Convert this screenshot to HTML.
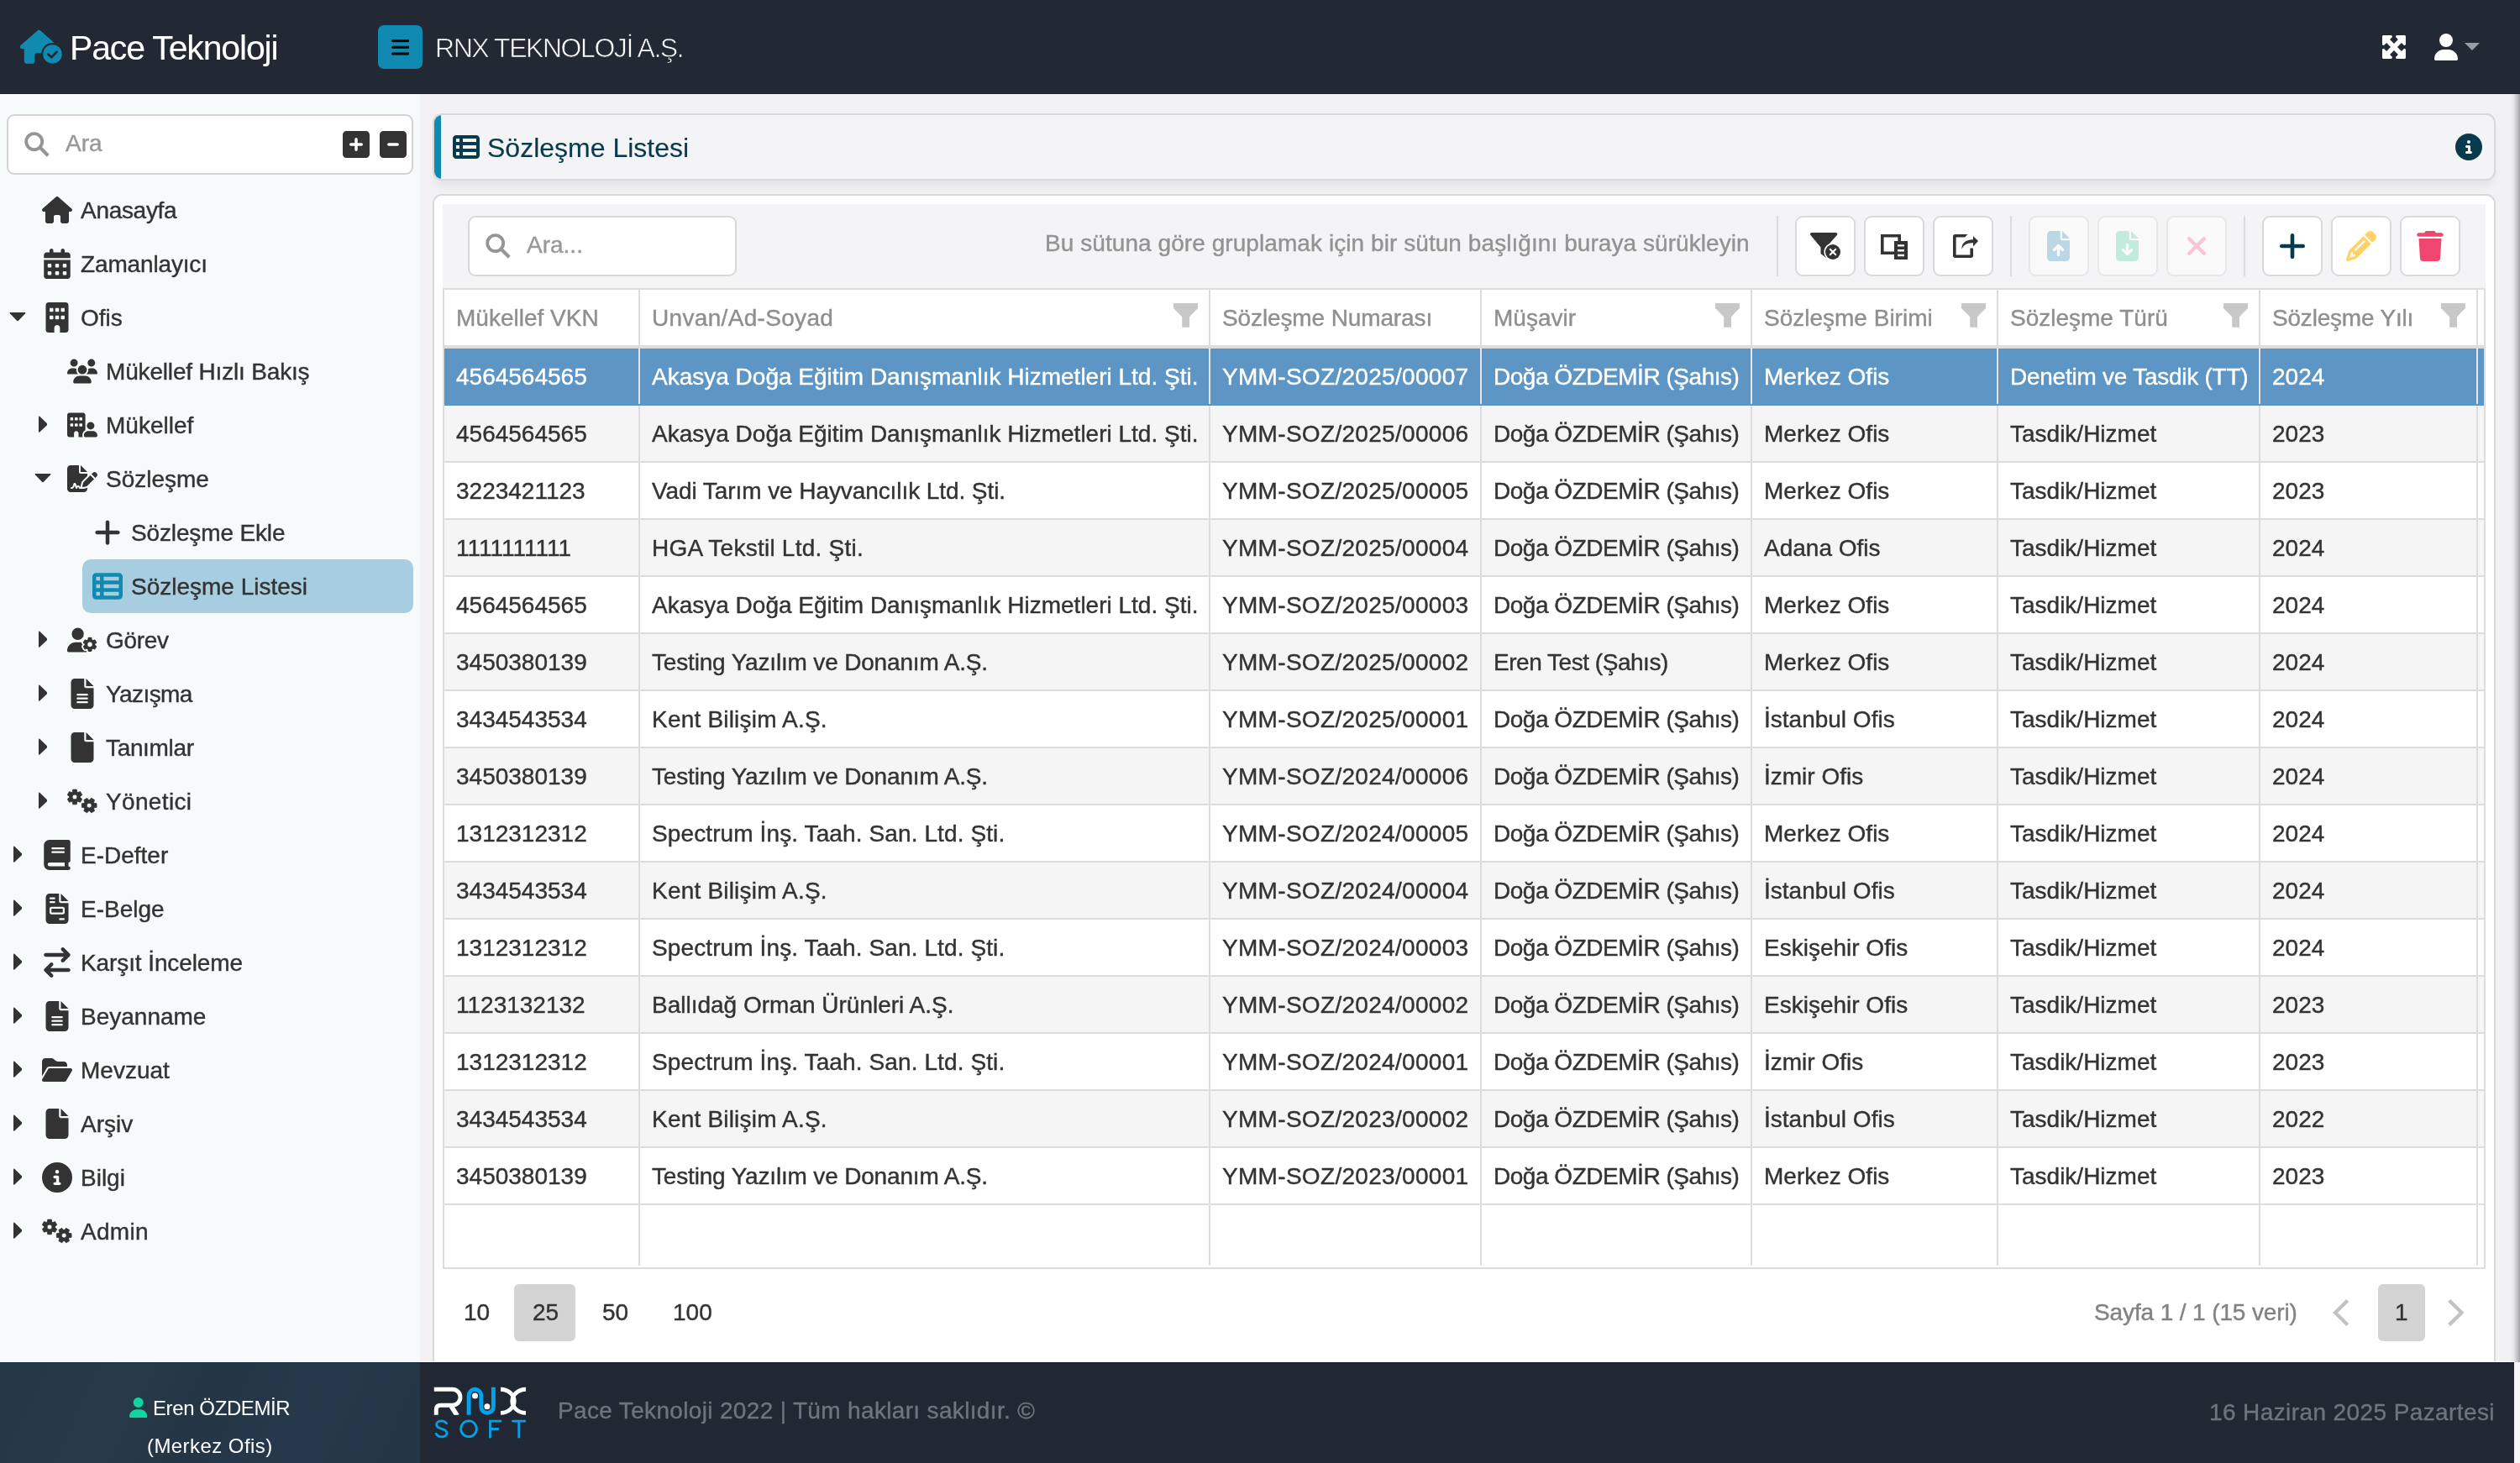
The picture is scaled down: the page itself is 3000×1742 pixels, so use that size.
<!DOCTYPE html><html><head><meta charset="utf-8"><title>Sözleşme Listesi</title><style>
*{box-sizing:border-box;margin:0;padding:0}
html,body{width:3000px;height:1742px;overflow:hidden}
body{position:relative;background:#f2f2f5;font-family:"Liberation Sans",sans-serif;font-size:28px;color:#333;-webkit-text-stroke:0.4px}
#w{position:absolute;left:0;top:0;width:3000px;height:1742px;will-change:transform}
.abs{position:absolute}
.t{position:absolute;white-space:nowrap;line-height:1}
#hdr{left:0;top:0;width:3000px;height:112px;background:#222834;box-shadow:inset 0 -1px 0 #1a202b}
#side{left:0;top:112px;width:500px;height:1510px;background:#f6fafb}
#foot{left:0;top:1621px;width:2993px;height:121px;background:#212834;border-top:1px solid #fff;box-shadow:inset 0 1px 0 #141b27}
#footl{left:0;top:1622px;width:500px;height:120px;box-shadow:inset 0 1px 0 #16283a;background:linear-gradient(115deg,#253646 0%,#28394a 30%,#243546 48%,#27384a 70%,#243546 100%)}
.mi{position:absolute;left:0;width:500px;height:64px}
.mi .t{top:18px;font-size:28px;color:#333}
.btn{position:absolute;top:257px;width:72px;height:72px;border:2px solid #dadada;border-radius:9px;background:#fff}
.btn.dis{background:#fafafb;border-color:#e8e8e8}
.sep{position:absolute;top:257px;width:2px;height:72px;background:#dcdcdc}
.row{position:absolute;left:529px;width:2428px;height:68px;border-bottom:2px solid #ddd;background:#fff}
.row.alt{background:#f5f5f5}
.row.sel{background:#5d95c5;color:#fff;border-bottom-color:#5d95c5}
.row.sel .c{border-left-color:#e4e4e4}
.c{position:absolute;top:0;height:100%;line-height:68px;font-size:28px;white-space:nowrap;padding-left:14px;border-left:2px solid #ddd;overflow:hidden}
.c:first-child{border-left:none}
.h .c{color:#8f8f8f;line-height:68px}
</style></head><body><div id="w">
<div id="hdr" class="abs"></div>
<svg viewBox="0 0 68 44" style="position:absolute;left:22px;top:34px;width:68px;height:44px;" fill="currentColor" preserveAspectRatio="xMidYMid meet"><defs><mask id="lgm"><rect width="68" height="44" fill="#fff"/><circle cx="40.500" cy="30.400" r="13.400" fill="#000"/><rect x="28.500" y="32" width="40" height="12" fill="#000"/></mask></defs><g mask="url(#lgm)" fill="#118ab2"><path transform="translate(1.800,1.800) scale(0.0781)" d="M575.8 255.5c0 18-15 32.100-32 32.100h-32l.7 160.200c0 2.700-.2 5.400-.5 8.100V472c0 22.100-17.900 40-40 40H456c-1.100 0-2.200 0-3.300-.1c-1.400 .1-2.800 .1-4.200 .1H416 392c-22.100 0-40-17.900-40-40V448 384c0-17.700-14.300-32-32-32H256c-17.700 0-32 14.300-32 32v64 24c0 22.100-17.900 40-40 40H160 128.100c-1.500 0-3-.1-4.500-.2c-1.200 .1-2.400 .2-3.600 .2H104c-22.100 0-40-17.900-40-40V360c0-.9 0-1.900 .1-2.800V287.600H32c-18 0-32-14-32-32.100c0-9 3-17 10-24L266.400 8c7-7 15-8 22-8s15 2 21 7L564.800 231.500c8 7 12 15 11 24z"/></g><circle cx="40.500" cy="30.400" r="11.250" fill="#118ab2"/><path d="M35.600 30.700L39.200 34.200L45.600 27.700" stroke="#222834" stroke-width="2.700" fill="none" stroke-linecap="round" stroke-linejoin="round"/></svg>
<div class="t" style="left:83px;top:37px;font-size:41px;letter-spacing:-1.15px;color:#fff;-webkit-text-stroke:0.1px" id="brand">Pace Teknoloji</div>
<div class="abs" style="left:450px;top:30px;width:53px;height:52px;background:#118ab2;border-radius:7px"></div>
<svg viewBox="0 0 448 512" style="position:absolute;left:465.8px;top:43.9px;width:21.45px;height:24.5px;color:#000;" fill="currentColor" preserveAspectRatio="xMidYMid meet"><path d="M0 96C0 78.300 14.300 64 32 64H416c17.700 0 32 14.300 32 32s-14.300 32-32 32H32C14.300 128 0 113.700 0 96zM0 256c0-17.700 14.300-32 32-32H416c17.700 0 32 14.300 32 32s-14.300 32-32 32H32c-17.700 0-32-14.300-32-32zM448 416c0 17.700-14.300 32-32 32H32c-17.700 0-32-14.300-32-32s14.300-32 32-32H416c17.700 0 32 14.300 32 32z" /></svg>
<div class="t" style="left:518px;top:41px;font-size:32px;letter-spacing:-1.45px;color:#fff;-webkit-text-stroke:0.7px #222834" id="comp">RNX TEKNOLOJİ A.Ş.</div>
<svg viewBox="32 32 448 448" style="position:absolute;left:2836px;top:42px;width:28px;height:28px;color:#fff;" fill="currentColor" preserveAspectRatio="xMidYMid meet"><path d="M200 32H56C42.700 32 32 42.700 32 56V200c0 9.700 5.800 18.500 14.800 22.200s19.300 1.700 26.200-5.200l40-40 79 79-79 79L73 295c-6.900-6.900-17.200-8.900-26.200-5.200S32 302.300 32 312V456c0 13.300 10.700 24 24 24H200c9.700 0 18.500-5.800 22.200-14.800s1.700-19.300-5.200-26.200l-40-40 79-79 79 79-40 40c-6.900 6.900-8.900 17.200-5.200 26.200s12.500 14.800 22.200 14.800H456c13.300 0 24-10.700 24-24V312c0-9.700-5.800-18.500-14.800-22.200s-19.300-1.700-26.200 5.200l-40 40-79-79 79-79 40 40c6.900 6.900 17.200 8.900 26.200 5.200s14.800-12.500 14.800-22.200V56c0-13.300-10.700-24-24-24H312c-9.700 0-18.500 5.800-22.200 14.800s-1.700 19.300 5.200 26.200l40 40-79 79-79-79 40-40c6.900-6.900 8.900-17.200 5.200-26.200S209.700 32 200 32z" /></svg>
<svg viewBox="0 0 448 512" style="position:absolute;left:2898px;top:40px;width:28px;height:32px;color:#fff;" fill="currentColor" preserveAspectRatio="xMidYMid meet"><path d="M224 256A128 128 0 1 0 224 0a128 128 0 1 0 0 256zm-45.700 48C79.800 304 0 383.800 0 482.300C0 498.700 13.300 512 29.700 512H418.300c16.400 0 29.700-13.300 29.700-29.700C448 383.800 368.200 304 269.700 304H178.300z" /></svg>
<svg viewBox="0 0 18 9" style="position:absolute;left:2934px;top:51px;width:18px;height:9px;color:#9a9da3;" fill="currentColor" preserveAspectRatio="xMidYMid meet"><path d="M0 0H18L9 9Z" /></svg>
<div id="side" class="abs"></div>
<div class="abs" style="left:8px;top:136px;width:484px;height:72px;background:#fff;border:2px solid #d2d2d2;border-radius:9px"></div>
<svg viewBox="0 0 30 30" style="position:absolute;left:28.5px;top:156.5px;width:30px;height:30px;color:#959595;" fill="currentColor" preserveAspectRatio="xMidYMid meet"><circle cx="11.700" cy="11.600" r="9.500" fill="none" stroke="currentColor" stroke-width="3.800"/><path d="M18.300 18.300L28.200 28.200" stroke="currentColor" stroke-width="4.200" fill="none"/></svg>
<div class="t" style="left:78px;top:157px;color:#999">Ara</div>
<svg viewBox="0 32 448 448" style="position:absolute;left:408px;top:156px;width:32px;height:32px;color:#333;" fill="currentColor" preserveAspectRatio="xMidYMid meet"><path d="M64 32C28.700 32 0 60.700 0 96V416c0 35.300 28.700 64 64 64H384c35.300 0 64-28.700 64-64V96c0-35.300-28.700-64-64-64H64zM200 344V280H136c-13.300 0-24-10.700-24-24s10.700-24 24-24h64V168c0-13.300 10.700-24 24-24s24 10.700 24 24v64h64c13.300 0 24 10.700 24 24s-10.700 24-24 24H248v64c0 13.300-10.700 24-24 24s-24-10.700-24-24z" /></svg>
<svg viewBox="0 32 448 448" style="position:absolute;left:452px;top:156px;width:32px;height:32px;color:#333;" fill="currentColor" preserveAspectRatio="xMidYMid meet"><path d="M64 32C28.700 32 0 60.700 0 96V416c0 35.300 28.700 64 64 64H384c35.300 0 64-28.700 64-64V96c0-35.300-28.700-64-64-64H64zm88 200H296c13.300 0 24 10.700 24 24s-10.700 24-24 24H152c-13.300 0-24-10.700-24-24s10.700-24 24-24z" /></svg>
<svg viewBox="0 0 576 512" style="position:absolute;left:50px;top:232px;width:36px;height:36px;color:#333;" fill="currentColor" preserveAspectRatio="xMidYMid meet"><path d="M575.8 255.5c0 18-15 32.100-32 32.100h-32l.7 160.200c0 2.700-.2 5.400-.5 8.100V472c0 22.100-17.900 40-40 40H456c-1.100 0-2.200 0-3.300-.1c-1.400 .1-2.800 .1-4.200 .1H416 392c-22.100 0-40-17.900-40-40V448 384c0-17.700-14.300-32-32-32H256c-17.700 0-32 14.300-32 32v64 24c0 22.100-17.900 40-40 40H160 128.100c-1.500 0-3-.1-4.500-.2c-1.200 .1-2.400 .2-3.600 .2H104c-22.100 0-40-17.900-40-40V360c0-.9 0-1.900 .1-2.800V287.600H32c-18 0-32-14-32-32.100c0-9 3-17 10-24L266.400 8c7-7 15-8 22-8s15 2 21 7L564.800 231.500c8 7 12 15 11 24z" /></svg>
<div class="t" style="left:96px;top:237px;font-size:28px;color:#333;letter-spacing:-0.3px">Anasayfa</div>
<svg viewBox="0 0 448 512" style="position:absolute;left:50px;top:296px;width:36px;height:36px;color:#333;" fill="currentColor" preserveAspectRatio="xMidYMid meet"><path d="M128 0c17.700 0 32 14.300 32 32V64H288V32c0-17.700 14.300-32 32-32s32 14.300 32 32V64h48c26.500 0 48 21.500 48 48v48H0V112C0 85.500 21.500 64 48 64H96V32c0-17.700 14.300-32 32-32zM0 192H448V464c0 26.500-21.500 48-48 48H48c-26.500 0-48-21.500-48-48V192zm64 80v32c0 8.800 7.200 16 16 16h32c8.800 0 16-7.200 16-16V272c0-8.800-7.200-16-16-16H80c-8.800 0-16 7.200-16 16zm128 0v32c0 8.800 7.200 16 16 16h32c8.800 0 16-7.200 16-16V272c0-8.800-7.200-16-16-16H208c-8.800 0-16 7.200-16 16zm144-16c-8.800 0-16 7.200-16 16v32c0 8.800 7.200 16 16 16h32c8.800 0 16-7.200 16-16V272c0-8.800-7.200-16-16-16H336zM64 400v32c0 8.800 7.200 16 16 16h32c8.800 0 16-7.200 16-16V400c0-8.800-7.200-16-16-16H80c-8.800 0-16 7.200-16 16zm144-16c-8.800 0-16 7.200-16 16v32c0 8.800 7.200 16 16 16h32c8.800 0 16-7.200 16-16V400c0-8.800-7.200-16-16-16H208zm112 16v32c0 8.800 7.200 16 16 16h32c8.800 0 16-7.200 16-16V400c0-8.800-7.200-16-16-16H336c-8.800 0-16 7.200-16 16z" /></svg>
<div class="t" style="left:96px;top:301px;font-size:28px;color:#333;letter-spacing:-0.15px">Zamanlayıcı</div>
<svg viewBox="0 0 20 11" style="position:absolute;left:11px;top:372px;width:20px;height:10.5px;color:#333;" fill="currentColor" preserveAspectRatio="xMidYMid meet"><path d="M.8 0H19.200Q20.300 .2 19.600 1.300L10.800 10.500Q10 11.200 9.200 10.500L.4 1.300Q-.3 .2 .8 0Z" /></svg>
<svg viewBox="0 0 384 512" style="position:absolute;left:50px;top:360px;width:36px;height:36px;color:#333;" fill="currentColor" preserveAspectRatio="xMidYMid meet"><path d="M48 0C21.500 0 0 21.500 0 48V464c0 26.500 21.500 48 48 48h96V432c0-26.500 21.500-48 48-48s48 21.500 48 48v80h96c26.500 0 48-21.500 48-48V48c0-26.500-21.500-48-48-48H48zM64 240c0-8.800 7.200-16 16-16h32c8.800 0 16 7.200 16 16v32c0 8.800-7.200 16-16 16H80c-8.800 0-16-7.200-16-16V240zm112-16h32c8.800 0 16 7.200 16 16v32c0 8.800-7.200 16-16 16H176c-8.800 0-16-7.200-16-16V240c0-8.800 7.200-16 16-16zm80 16c0-8.800 7.200-16 16-16h32c8.800 0 16 7.200 16 16v32c0 8.800-7.200 16-16 16H272c-8.800 0-16-7.200-16-16V240zM80 96h32c8.800 0 16 7.200 16 16v32c0 8.800-7.200 16-16 16H80c-8.800 0-16-7.200-16-16V112c0-8.800 7.200-16 16-16zm80 16c0-8.800 7.200-16 16-16h32c8.800 0 16 7.200 16 16v32c0 8.800-7.200 16-16 16H176c-8.800 0-16-7.200-16-16V112zM272 96h32c8.800 0 16 7.200 16 16v32c0 8.800-7.200 16-16 16H272c-8.800 0-16-7.200-16-16V112c0-8.800 7.200-16 16-16z" /></svg>
<div class="t" style="left:96px;top:365px;font-size:28px;color:#333">Ofis</div>
<svg viewBox="0 0 640 512" style="position:absolute;left:80px;top:424px;width:36px;height:36px;color:#333;" fill="currentColor" preserveAspectRatio="xMidYMid meet"><path d="M144 0a80 80 0 1 1 0 160A80 80 0 1 1 144 0zM512 0a80 80 0 1 1 0 160A80 80 0 1 1 512 0zM0 298.700C0 239.800 47.800 192 106.700 192h42.700c15.900 0 31 3.500 44.600 9.700c-1.300 7.200-1.900 14.700-1.900 22.300c0 38.200 16.800 72.500 43.300 96c-.2 0-.4 0-.7 0H21.300C9.600 320 0 310.400 0 298.700zM405.300 320c-.2 0-.4 0-.7 0c26.600-23.500 43.300-57.800 43.300-96c0-7.600-.7-15-1.900-22.300c13.600-6.300 28.700-9.700 44.600-9.700h42.700C592.200 192 640 239.800 640 298.700c0 11.800-9.600 21.300-21.300 21.300H405.300zM224 224a96 96 0 1 1 192 0 96 96 0 1 1 -192 0zM128 485.300C128 411.700 187.700 352 261.300 352H378.700C452.300 352 512 411.700 512 485.300c0 14.700-11.900 26.700-26.700 26.700H154.700c-14.700 0-26.700-11.900-26.700-26.700z" /></svg>
<div class="t" style="left:126px;top:429px;font-size:28px;color:#333;letter-spacing:-0.17px">Mükellef Hızlı Bakış</div>
<svg viewBox="0 0 11 20" style="position:absolute;left:45.7px;top:494.7px;width:10.7px;height:20.4px;color:#333;" fill="currentColor" preserveAspectRatio="xMidYMid meet"><path d="M0 .8V19.200Q.2 20.300 1.300 19.600L10.500 10.800Q11.200 10 10.500 9.200L1.300 .4Q.2-.3 0 .8Z" /></svg>
<svg viewBox="0 0 640 512" style="position:absolute;left:80px;top:488px;width:36px;height:36px;color:#333;" fill="currentColor" preserveAspectRatio="xMidYMid meet"><path d="M48 0C21.500 0 0 21.500 0 48V464c0 26.500 21.500 48 48 48h96V432c0-26.500 21.500-48 48-48s48 21.500 48 48v80h89.900c-6.300-10.200-9.900-22.200-9.900-35.100c0-46.900 25.800-87.800 64-109.200V271.800 48c0-26.500-21.500-48-48-48H48zM64 240c0-8.800 7.200-16 16-16h32c8.800 0 16 7.200 16 16v32c0 8.800-7.200 16-16 16H80c-8.800 0-16-7.200-16-16V240zm112-16h32c8.800 0 16 7.200 16 16v32c0 8.800-7.200 16-16 16H176c-8.800 0-16-7.200-16-16V240c0-8.800 7.200-16 16-16zm80 16c0-8.800 7.200-16 16-16h32c8.800 0 16 7.200 16 16v32c0 8.800-7.200 16-16 16H272c-8.800 0-16-7.200-16-16V240zM80 96h32c8.800 0 16 7.200 16 16v32c0 8.800-7.200 16-16 16H80c-8.800 0-16-7.200-16-16V112c0-8.800 7.200-16 16-16zm80 16c0-8.800 7.200-16 16-16h32c8.800 0 16 7.200 16 16v32c0 8.800-7.200 16-16 16H176c-8.800 0-16-7.200-16-16V112zM272 96h32c8.800 0 16 7.200 16 16v32c0 8.800-7.200 16-16 16H272c-8.800 0-16-7.200-16-16V112c0-8.800 7.200-16 16-16zM576 272a80 80 0 1 0 -160 0 80 80 0 1 0 160 0zM352 477.100c0 19.300 15.600 34.900 34.900 34.900H605.100c19.300 0 34.900-15.600 34.900-34.900c0-51.400-41.700-93.100-93.100-93.100H445.100c-51.400 0-93.100 41.700-93.100 93.100z" /></svg>
<div class="t" style="left:126px;top:493px;font-size:28px;color:#333">Mükellef</div>
<svg viewBox="0 0 20 11" style="position:absolute;left:41px;top:564px;width:20px;height:10.5px;color:#333;" fill="currentColor" preserveAspectRatio="xMidYMid meet"><path d="M.8 0H19.200Q20.300 .2 19.600 1.300L10.800 10.500Q10 11.200 9.200 10.500L.4 1.300Q-.3 .2 .8 0Z" /></svg>
<svg viewBox="0 0 576 512" style="position:absolute;left:80px;top:552px;width:36px;height:36px;color:#333;" fill="currentColor" preserveAspectRatio="xMidYMid meet"><path d="M64 0C28.700 0 0 28.700 0 64V448c0 35.300 28.700 64 64 64H320c35.300 0 64-28.700 64-64V428.700c-2.700 1.100-5.400 2-8.200 2.700l-60.100 15c-3 .7-6 1.200-9 1.400c-.9 .1-1.800 .2-2.700 .2H240c-6.100 0-11.600-3.400-14.300-8.800l-8.800-17.700c-1.700-3.400-5.100-5.500-8.800-5.500s-7.200 2.100-8.800 5.500l-8.800 17.700c-2.900 5.900-9.200 9.400-15.700 8.800s-12.100-5.100-13.900-11.300L144 381l-9.800 32.800c-6.100 20.300-24.800 34.200-46 34.200H80c-8.800 0-16-7.200-16-16s7.200-16 16-16h8.200c7.100 0 13.300-4.600 15.300-11.400l14.900-49.500c3.400-11.300 13.800-19.100 25.600-19.100s22.200 7.800 25.600 19.100l11.600 38.600c7.400-6.200 16.800-9.700 26.800-9.700c15.900 0 30.400 9 37.500 23.200l4.400 8.800h8.900c-3.100-8.800-3.700-18.400-1.400-27.800l15-60.100c2.800-11.300 8.600-21.500 16.800-29.700L384 203.600V160H256c-17.700 0-32-14.300-32-32V0H64zM256 0V128H384L256 0zM549.800 139.700c-15.600-15.600-40.900-15.600-56.600 0l-29.400 29.400 71 71 29.400-29.400c15.600-15.600 15.600-40.900 0-56.600l-14.400-14.400zM311.900 321c-4.100 4.100-7 9.200-8.400 14.900l-15 60.100c-1.400 5.500 .2 11.200 4.200 15.200s9.700 5.600 15.200 4.200l60.100-15c5.600-1.400 10.800-4.300 14.900-8.400L512.100 262.700l-71-71L311.900 321z" /></svg>
<div class="t" style="left:126px;top:557px;font-size:28px;color:#333">Sözleşme</div>
<svg viewBox="0 0 448 512" style="position:absolute;left:110px;top:616px;width:36px;height:36px;color:#333;" fill="currentColor" preserveAspectRatio="xMidYMid meet"><path d="M256 80c0-17.700-14.300-32-32-32s-32 14.300-32 32V224H48c-17.700 0-32 14.300-32 32s14.300 32 32 32H192V432c0 17.700 14.300 32 32 32s32-14.300 32-32V288H400c17.700 0 32-14.300 32-32s-14.300-32-32-32H256V80z" /></svg>
<div class="t" style="left:156px;top:621px;font-size:28px;color:#333;letter-spacing:-0.14px">Sözleşme Ekle</div>
<div class="abs" style="left:98px;top:666px;width:394px;height:64px;background:#a6cde0;border-radius:10px"></div>
<svg viewBox="0 0 512 512" style="position:absolute;left:110px;top:680px;width:36px;height:36px;color:#118ab2;" fill="currentColor" preserveAspectRatio="xMidYMid meet"><path d="M0 96C0 60.700 28.700 32 64 32H448c35.300 0 64 28.700 64 64V416c0 35.300-28.700 64-64 64H64c-35.300 0-64-28.700-64-64V96zm64 0v64h64V96H64zm384 0H192v64H448V96zM64 224v64h64V224H64zm384 0H192v64H448V224zM64 352v64h64V352H64zm384 0H192v64H448V352z" /></svg>
<div class="t" style="left:156px;top:685px;font-size:28px;color:#333">Sözleşme Listesi</div>
<svg viewBox="0 0 11 20" style="position:absolute;left:45.7px;top:750.7px;width:10.7px;height:20.4px;color:#333;" fill="currentColor" preserveAspectRatio="xMidYMid meet"><path d="M0 .8V19.200Q.2 20.300 1.300 19.600L10.500 10.800Q11.200 10 10.500 9.200L1.300 .4Q.2-.3 0 .8Z" /></svg>
<svg viewBox="0 0 640 512" style="position:absolute;left:80px;top:744px;width:36px;height:36px;color:#333;" fill="currentColor" preserveAspectRatio="xMidYMid meet"><path d="M224 0a128 128 0 1 1 0 256A128 128 0 1 1 224 0zM178.300 304h91.400c11.800 0 23.400 1.200 34.500 3.300c-2.100 18.500 7.400 35.600 21.800 44.800c-16.600 10.600-26.700 31.600-20 53.300c4 12.900 9.400 25.500 16.400 37.600s15.200 23.100 24.400 33c15.700 16.900 39.600 18.400 57.200 8.700v.9c0 9.200 2.700 18.500 7.900 26.300H29.700C13.300 512 0 498.700 0 482.300C0 383.800 79.800 304 178.300 304zM436 218.200c0-7 4.500-13.300 11.300-14.800c10.500-2.400 21.500-3.700 32.700-3.700s22.200 1.300 32.700 3.700c6.800 1.500 11.300 7.800 11.300 14.800v30.600c7.900 3.400 15.400 7.700 22.300 12.800l24.900-14.300c6.100-3.500 13.700-2.700 18.500 2.400c7.600 8.100 14.300 17.200 20.100 27.200s10.300 20.400 13.500 31c2.100 6.700-1.100 13.700-7.200 17.200l-25 14.400c.4 4 .7 8.100 .7 12.300s-.2 8.200-.7 12.300l25 14.400c6.100 3.500 9.200 10.500 7.200 17.200c-3.300 10.600-7.800 21-13.500 31s-12.500 19.100-20.100 27.200c-4.800 5.100-12.500 5.900-18.500 2.400l-24.900-14.300c-6.900 5.100-14.300 9.400-22.300 12.800l0 30.600c0 7-4.500 13.300-11.300 14.800c-10.500 2.400-21.500 3.700-32.700 3.700s-22.200-1.300-32.700-3.700c-6.800-1.500-11.300-7.800-11.300-14.800V454.800c-8-3.400-15.600-7.700-22.500-12.900l-24.700 14.300c-6.100 3.500-13.700 2.700-18.500-2.400c-7.600-8.100-14.300-17.200-20.100-27.200s-10.300-20.400-13.500-31c-2.100-6.700 1.100-13.700 7.200-17.200l24.800-14.300c-.4-4.100-.7-8.200-.7-12.400s.2-8.300 .7-12.400L343.800 325c-6.100-3.500-9.200-10.500-7.200-17.200c3.300-10.600 7.700-21 13.500-31s12.500-19.100 20.100-27.200c4.800-5.100 12.400-5.900 18.500-2.400l24.800 14.300c6.900-5.100 14.500-9.400 22.500-12.900V218.200zm92.100 133.500a48.100 48.100 0 1 0 -96.100 0 48.100 48.100 0 1 0 96.100 0z" /></svg>
<div class="t" style="left:126px;top:749px;font-size:28px;color:#333;letter-spacing:-0.3px">Görev</div>
<svg viewBox="0 0 11 20" style="position:absolute;left:45.7px;top:814.7px;width:10.7px;height:20.4px;color:#333;" fill="currentColor" preserveAspectRatio="xMidYMid meet"><path d="M0 .8V19.200Q.2 20.300 1.300 19.600L10.500 10.800Q11.200 10 10.500 9.200L1.300 .4Q.2-.3 0 .8Z" /></svg>
<svg viewBox="0 0 384 512" style="position:absolute;left:80px;top:808px;width:36px;height:36px;color:#333;" fill="currentColor" preserveAspectRatio="xMidYMid meet"><path d="M64 0C28.700 0 0 28.700 0 64V448c0 35.300 28.700 64 64 64H320c35.300 0 64-28.700 64-64V160H256c-17.700 0-32-14.300-32-32V0H64zM256 0V128H384L256 0zM112 256H272c8.800 0 16 7.200 16 16s-7.200 16-16 16H112c-8.800 0-16-7.200-16-16s7.200-16 16-16zm0 64H272c8.800 0 16 7.200 16 16s-7.200 16-16 16H112c-8.800 0-16-7.200-16-16s7.200-16 16-16zm0 64H272c8.800 0 16 7.200 16 16s-7.200 16-16 16H112c-8.800 0-16-7.200-16-16s7.200-16 16-16z" /></svg>
<div class="t" style="left:126px;top:813px;font-size:28px;color:#333;letter-spacing:-0.57px">Yazışma</div>
<svg viewBox="0 0 11 20" style="position:absolute;left:45.7px;top:878.7px;width:10.7px;height:20.4px;color:#333;" fill="currentColor" preserveAspectRatio="xMidYMid meet"><path d="M0 .8V19.200Q.2 20.300 1.300 19.600L10.500 10.800Q11.200 10 10.500 9.200L1.300 .4Q.2-.3 0 .8Z" /></svg>
<svg viewBox="0 0 384 512" style="position:absolute;left:80px;top:872px;width:36px;height:36px;color:#333;" fill="currentColor" preserveAspectRatio="xMidYMid meet"><path d="M0 64C0 28.700 28.700 0 64 0H224V128c0 17.700 14.300 32 32 32H384V448c0 35.300-28.700 64-64 64H64c-35.300 0-64-28.700-64-64V64zm384 64H256V0L384 128z" /></svg>
<div class="t" style="left:126px;top:877px;font-size:28px;color:#333;letter-spacing:-0.34px">Tanımlar</div>
<svg viewBox="0 0 11 20" style="position:absolute;left:45.7px;top:942.7px;width:10.7px;height:20.4px;color:#333;" fill="currentColor" preserveAspectRatio="xMidYMid meet"><path d="M0 .8V19.200Q.2 20.300 1.300 19.600L10.500 10.800Q11.200 10 10.500 9.200L1.300 .4Q.2-.3 0 .8Z" /></svg>
<svg viewBox="0 0 640 512" style="position:absolute;left:80px;top:936px;width:36px;height:36px;color:#333;" fill="currentColor" preserveAspectRatio="xMidYMid meet"><path d="M209.4 271.0 L199.5 323.1 L120.5 323.1 L110.6 271.0 L93.8 261.3 L43.7 278.8 L4.2 210.3 L44.4 175.7 L44.4 156.3 L4.2 121.7 L43.7 53.2 L93.8 70.7 L110.6 61.0 L120.5 8.9 L199.5 8.9 L209.4 61.0 L226.2 70.7 L276.3 53.2 L315.8 121.7 L275.6 156.3 L275.6 175.7 L315.8 210.3 L276.3 278.8 L226.2 261.3Z M212.0 166.0 A52 52 0 1 0 108.0 166.0 A52 52 0 1 0 212.0 166.0Z M571.0 296.6 L623.1 306.5 L623.1 385.5 L571.0 395.4 L561.3 412.2 L578.8 462.3 L510.3 501.8 L475.7 461.6 L456.3 461.6 L421.7 501.8 L353.2 462.3 L370.7 412.2 L361.0 395.4 L308.9 385.5 L308.9 306.5 L361.0 296.6 L370.7 279.8 L353.2 229.7 L421.7 190.2 L456.3 230.4 L475.7 230.4 L510.3 190.2 L578.8 229.7 L561.3 279.8Z M518.0 346.0 A52 52 0 1 0 414.0 346.0 A52 52 0 1 0 518.0 346.0Z" fill-rule="evenodd" stroke="currentColor" stroke-width="14" stroke-linejoin="round"/></svg>
<div class="t" style="left:126px;top:941px;font-size:28px;color:#333;letter-spacing:0.35px">Yönetici</div>
<svg viewBox="0 0 11 20" style="position:absolute;left:15.7px;top:1006.7px;width:10.7px;height:20.4px;color:#333;" fill="currentColor" preserveAspectRatio="xMidYMid meet"><path d="M0 .8V19.200Q.2 20.300 1.300 19.600L10.500 10.800Q11.200 10 10.500 9.200L1.300 .4Q.2-.3 0 .8Z" /></svg>
<svg viewBox="0 0 448 512" style="position:absolute;left:50px;top:1000px;width:36px;height:36px;color:#333;" fill="currentColor" preserveAspectRatio="xMidYMid meet"><path d="M96 0C43 0 0 43 0 96V416c0 53 43 96 96 96H384h32c17.700 0 32-14.300 32-32s-14.300-32-32-32V384c17.700 0 32-14.300 32-32V32c0-17.700-14.300-32-32-32H384 96zm0 384H352v64H96c-17.700 0-32-14.300-32-32s14.300-32 32-32zm32-240c0-8.800 7.200-16 16-16H336c8.800 0 16 7.200 16 16s-7.200 16-16 16H144c-8.800 0-16-7.200-16-16zm16 48H336c8.800 0 16 7.200 16 16s-7.200 16-16 16H144c-8.800 0-16-7.200-16-16s7.200-16 16-16z" /></svg>
<div class="t" style="left:96px;top:1005px;font-size:28px;color:#333">E-Defter</div>
<svg viewBox="0 0 11 20" style="position:absolute;left:15.7px;top:1070.7px;width:10.7px;height:20.4px;color:#333;" fill="currentColor" preserveAspectRatio="xMidYMid meet"><path d="M0 .8V19.200Q.2 20.300 1.300 19.600L10.500 10.800Q11.200 10 10.500 9.200L1.300 .4Q.2-.3 0 .8Z" /></svg>
<svg viewBox="0 0 384 512" style="position:absolute;left:50px;top:1064px;width:36px;height:36px;color:#333;" fill="currentColor" preserveAspectRatio="xMidYMid meet"><path d="M64 0C28.700 0 0 28.700 0 64V448c0 35.300 28.700 64 64 64H320c35.300 0 64-28.700 64-64V160H256c-17.700 0-32-14.300-32-32V0H64zM256 0V128H384L256 0zM80 64h64c8.800 0 16 7.200 16 16s-7.200 16-16 16H80c-8.800 0-16-7.200-16-16s7.200-16 16-16zm0 64h64c8.800 0 16 7.200 16 16s-7.200 16-16 16H80c-8.800 0-16-7.200-16-16s7.200-16 16-16zm16 96H288c17.700 0 32 14.300 32 32v64c0 17.700-14.300 32-32 32H96c-17.700 0-32-14.300-32-32V256c0-17.700 14.300-32 32-32zm0 32v64H288V256H96zM240 416h64c8.800 0 16 7.200 16 16s-7.200 16-16 16H240c-8.800 0-16-7.200-16-16s7.200-16 16-16z" /></svg>
<div class="t" style="left:96px;top:1069px;font-size:28px;color:#333">E-Belge</div>
<svg viewBox="0 0 11 20" style="position:absolute;left:15.7px;top:1134.7px;width:10.7px;height:20.4px;color:#333;" fill="currentColor" preserveAspectRatio="xMidYMid meet"><path d="M0 .8V19.200Q.2 20.300 1.300 19.600L10.500 10.800Q11.200 10 10.500 9.200L1.300 .4Q.2-.3 0 .8Z" /></svg>
<svg viewBox="0 0 448 512" style="position:absolute;left:50px;top:1128px;width:36px;height:36px;color:#333;" fill="currentColor" preserveAspectRatio="xMidYMid meet"><path d="M438.600 150.600c12.500-12.500 12.500-32.800 0-45.300l-96-96c-12.500-12.500-32.800-12.500-45.300 0s-12.500 32.800 0 45.300L338.700 96 32 96C14.300 96 0 110.300 0 128s14.300 32 32 32l306.700 0-41.400 41.400c-12.500 12.500-12.500 32.800 0 45.300s32.800 12.500 45.300 0l96-96zm-333.300 352c12.500 12.500 32.800 12.500 45.300 0s12.500-32.800 0-45.300L109.300 416 416 416c17.700 0 32-14.300 32-32s-14.300-32-32-32l-306.700 0 41.400-41.400c12.500-12.500 12.500-32.800 0-45.300s-32.800-12.500-45.300 0l-96 96c-12.500 12.500-12.500 32.800 0 45.300l96 96z" /></svg>
<div class="t" style="left:96px;top:1133px;font-size:28px;color:#333;letter-spacing:-0.1px">Karşıt İnceleme</div>
<svg viewBox="0 0 11 20" style="position:absolute;left:15.7px;top:1198.7px;width:10.7px;height:20.4px;color:#333;" fill="currentColor" preserveAspectRatio="xMidYMid meet"><path d="M0 .8V19.200Q.2 20.300 1.300 19.600L10.500 10.800Q11.200 10 10.500 9.200L1.300 .4Q.2-.3 0 .8Z" /></svg>
<svg viewBox="0 0 384 512" style="position:absolute;left:50px;top:1192px;width:36px;height:36px;color:#333;" fill="currentColor" preserveAspectRatio="xMidYMid meet"><path d="M64 0C28.700 0 0 28.700 0 64V448c0 35.300 28.700 64 64 64H320c35.300 0 64-28.700 64-64V160H256c-17.700 0-32-14.300-32-32V0H64zM256 0V128H384L256 0zM112 256H272c8.800 0 16 7.200 16 16s-7.200 16-16 16H112c-8.800 0-16-7.200-16-16s7.200-16 16-16zm0 64H272c8.800 0 16 7.200 16 16s-7.200 16-16 16H112c-8.800 0-16-7.200-16-16s7.200-16 16-16zm0 64H272c8.800 0 16 7.200 16 16s-7.200 16-16 16H112c-8.800 0-16-7.200-16-16s7.200-16 16-16z" /></svg>
<div class="t" style="left:96px;top:1197px;font-size:28px;color:#333">Beyanname</div>
<svg viewBox="0 0 11 20" style="position:absolute;left:15.7px;top:1262.7px;width:10.7px;height:20.4px;color:#333;" fill="currentColor" preserveAspectRatio="xMidYMid meet"><path d="M0 .8V19.200Q.2 20.300 1.300 19.600L10.500 10.800Q11.200 10 10.500 9.200L1.300 .4Q.2-.3 0 .8Z" /></svg>
<svg viewBox="0 0 576 512" style="position:absolute;left:50px;top:1256px;width:36px;height:36px;color:#333;" fill="currentColor" preserveAspectRatio="xMidYMid meet"><path d="M88.700 223.800L0 375.800V96C0 60.700 28.700 32 64 32H181.500c17 0 33.300 6.700 45.300 18.700l26.500 26.500c12 12 28.300 18.700 45.300 18.700H416c35.300 0 64 28.700 64 64v32H144c-22.800 0-43.800 12.100-55.300 31.800zm27.600 16.100C122.100 230 132.600 224 144 224H544c11.500 0 22 6.100 27.700 16.100s5.700 22.200-.1 32.100l-112 192C453.900 474 443.400 480 432 480H32c-11.500 0-22-6.100-27.700-16.100s-5.700-22.200 .1-32.100l112-192z" /></svg>
<div class="t" style="left:96px;top:1261px;font-size:28px;color:#333">Mevzuat</div>
<svg viewBox="0 0 11 20" style="position:absolute;left:15.7px;top:1326.7px;width:10.7px;height:20.4px;color:#333;" fill="currentColor" preserveAspectRatio="xMidYMid meet"><path d="M0 .8V19.200Q.2 20.300 1.300 19.600L10.500 10.800Q11.200 10 10.500 9.200L1.300 .4Q.2-.3 0 .8Z" /></svg>
<svg viewBox="0 0 384 512" style="position:absolute;left:50px;top:1320px;width:36px;height:36px;color:#333;" fill="currentColor" preserveAspectRatio="xMidYMid meet"><path d="M0 64C0 28.700 28.700 0 64 0H224V128c0 17.700 14.300 32 32 32H384V448c0 35.300-28.700 64-64 64H64c-35.300 0-64-28.700-64-64V64zm384 64H256V0L384 128z" /></svg>
<div class="t" style="left:96px;top:1325px;font-size:28px;color:#333">Arşiv</div>
<svg viewBox="0 0 11 20" style="position:absolute;left:15.7px;top:1390.7px;width:10.7px;height:20.4px;color:#333;" fill="currentColor" preserveAspectRatio="xMidYMid meet"><path d="M0 .8V19.200Q.2 20.300 1.300 19.600L10.500 10.800Q11.200 10 10.500 9.200L1.300 .4Q.2-.3 0 .8Z" /></svg>
<svg viewBox="0 0 512 512" style="position:absolute;left:50px;top:1384px;width:36px;height:36px;color:#333;" fill="currentColor" preserveAspectRatio="xMidYMid meet"><path d="M256 512A256 256 0 1 0 256 0a256 256 0 1 0 0 512zM216 336h24V272H216c-13.300 0-24-10.700-24-24s10.700-24 24-24h48c13.300 0 24 10.700 24 24v88h8c13.300 0 24 10.700 24 24s-10.700 24-24 24H216c-13.300 0-24-10.700-24-24s10.700-24 24-24zm40-208a32 32 0 1 1 0 64 32 32 0 1 1 0-64z" /></svg>
<div class="t" style="left:96px;top:1389px;font-size:28px;color:#333">Bilgi</div>
<svg viewBox="0 0 11 20" style="position:absolute;left:15.7px;top:1454.7px;width:10.7px;height:20.4px;color:#333;" fill="currentColor" preserveAspectRatio="xMidYMid meet"><path d="M0 .8V19.200Q.2 20.300 1.300 19.600L10.500 10.800Q11.200 10 10.500 9.200L1.300 .4Q.2-.3 0 .8Z" /></svg>
<svg viewBox="0 0 640 512" style="position:absolute;left:50px;top:1448px;width:36px;height:36px;color:#333;" fill="currentColor" preserveAspectRatio="xMidYMid meet"><path d="M209.4 271.0 L199.5 323.1 L120.5 323.1 L110.6 271.0 L93.8 261.3 L43.7 278.8 L4.2 210.3 L44.4 175.7 L44.4 156.3 L4.2 121.7 L43.7 53.2 L93.8 70.7 L110.6 61.0 L120.5 8.9 L199.5 8.9 L209.4 61.0 L226.2 70.7 L276.3 53.2 L315.8 121.7 L275.6 156.3 L275.6 175.7 L315.8 210.3 L276.3 278.8 L226.2 261.3Z M212.0 166.0 A52 52 0 1 0 108.0 166.0 A52 52 0 1 0 212.0 166.0Z M571.0 296.6 L623.1 306.5 L623.1 385.5 L571.0 395.4 L561.3 412.2 L578.8 462.3 L510.3 501.8 L475.7 461.6 L456.3 461.6 L421.7 501.8 L353.2 462.3 L370.7 412.2 L361.0 395.4 L308.9 385.5 L308.9 306.5 L361.0 296.6 L370.7 279.8 L353.2 229.7 L421.7 190.2 L456.3 230.4 L475.7 230.4 L510.3 190.2 L578.8 229.7 L561.3 279.8Z M518.0 346.0 A52 52 0 1 0 414.0 346.0 A52 52 0 1 0 518.0 346.0Z" fill-rule="evenodd" stroke="currentColor" stroke-width="14" stroke-linejoin="round"/></svg>
<div class="t" style="left:96px;top:1453px;font-size:28px;color:#333;letter-spacing:0.3px">Admin</div>
<div class="abs" style="left:515px;top:135px;width:2456px;height:80px;background:#f4f4f7;border:2px solid #d9d9db;border-radius:11px;box-shadow:0 9px 10px -2px rgba(0,0,0,0.055);overflow:hidden"><div style="position:absolute;left:0;top:0;width:8px;height:100%;background:#118ab2"></div></div>
<svg viewBox="0 32 512 448" style="position:absolute;left:539px;top:161px;width:32px;height:28px;color:#073b4c;" fill="currentColor" preserveAspectRatio="xMidYMid meet"><path d="M0 96C0 60.700 28.700 32 64 32H448c35.300 0 64 28.700 64 64V416c0 35.300-28.700 64-64 64H64c-35.300 0-64-28.700-64-64V96zm64 0v64h64V96H64zm384 0H192v64H448V96zM64 224v64h64V224H64zm384 0H192v64H448V224zM64 352v64h64V352H64zm384 0H192v64H448V352z" /></svg>
<div class="t" style="left:580px;top:160px;font-size:32px;color:#073b4c;-webkit-text-stroke:0.15px" id="title">Sözleşme Listesi</div>
<svg viewBox="0 0 512 512" style="position:absolute;left:2923px;top:159px;width:32px;height:32px;color:#073b4c;" fill="currentColor" preserveAspectRatio="xMidYMid meet"><path d="M256 512A256 256 0 1 0 256 0a256 256 0 1 0 0 512zM216 336h24V272H216c-13.300 0-24-10.700-24-24s10.700-24 24-24h48c13.300 0 24 10.700 24 24v88h8c13.300 0 24 10.700 24 24s-10.700 24-24 24H216c-13.300 0-24-10.700-24-24s10.700-24 24-24zm40-208a32 32 0 1 1 0 64 32 32 0 1 1 0-64z" /></svg>
<div class="abs" style="left:515px;top:231px;width:2456px;height:1400px;background:#fff;border:2px solid #d9d9db;border-radius:11px"></div>
<div class="abs" style="left:527px;top:243px;width:2432px;height:102px;background:#f4f4f6"></div>
<div class="abs" style="left:557px;top:257px;width:320px;height:72px;background:#fff;border:2px solid #d8d8d8;border-radius:9px"></div>
<svg viewBox="0 0 30 30" style="position:absolute;left:577.5px;top:277.5px;width:30px;height:30px;color:#959595;" fill="currentColor" preserveAspectRatio="xMidYMid meet"><circle cx="11.700" cy="11.600" r="9.500" fill="none" stroke="currentColor" stroke-width="3.800"/><path d="M18.300 18.300L28.200 28.200" stroke="currentColor" stroke-width="4.200" fill="none"/></svg>
<div class="t" style="left:627px;top:278px;color:#999">Ara...</div>
<div class="t" style="left:1244px;top:276px;letter-spacing:0.067px;color:#939393" id="grp">Bu sütuna göre gruplamak için bir sütun başlığını buraya sürükleyin</div>
<div class="sep" style="left:2115px"></div>
<div class="sep" style="left:2393px"></div>
<div class="sep" style="left:2671px"></div>
<div class="btn" style="left:2137px"></div>
<div class="btn" style="left:2219px"></div>
<div class="btn" style="left:2301px"></div>
<div class="btn dis" style="left:2415px"></div>
<div class="btn dis" style="left:2497px"></div>
<div class="btn dis" style="left:2579px"></div>
<div class="btn" style="left:2693px"></div>
<div class="btn" style="left:2775px"></div>
<div class="btn" style="left:2857px"></div>
<svg viewBox="0 0 36 32" style="position:absolute;left:2155px;top:277px;width:36px;height:32px;color:#333;" fill="currentColor" preserveAspectRatio="xMidYMid meet"><defs><mask id="fxm"><rect x="0" y="0" width="36" height="32" fill="#fff"/><circle cx="27" cy="23" r="10.600" fill="#000"/></mask></defs><path d="M2 0H30.500C32.500 0 32.800 1.800 31.800 3L19 17.500V30L12.500 25V17.500L.5 3C-.5 1.800 0 0 2 0Z" mask="url(#fxm)"/><circle cx="27" cy="23" r="9"/><path d="M23.700 19.700L30.300 26.300M30.300 19.700L23.700 26.300" stroke="#fff" stroke-width="2" fill="none" stroke-linecap="round"/></svg>
<svg viewBox="0 0 32 30" style="position:absolute;left:2239px;top:279px;width:32px;height:30px;color:#333;" fill="currentColor" preserveAspectRatio="xMidYMid meet"><path d="M0 0H24V8H32V30H16V24H0ZM3.600 3.600V20.400H16V8H20.400V3.600ZM20 12.200V14.600H28V12.200ZM20 18V20.400H28V18ZM20 23.800V26.200H28V23.800Z" fill-rule="evenodd"/></svg>
<svg viewBox="0 0 30 28" style="position:absolute;left:2325px;top:279px;width:30px;height:28px;color:#333;" fill="currentColor" preserveAspectRatio="xMidYMid meet"><path d="M2.500 0H17.500L14 3.600H3.600V24.400H20.400V16.500H24V25.500C24 27 23 28 21.500 28H2.500C1 28 0 27 0 25.500V2.500C0 1 1 0 2.500 0Z" /><path d="M24 2L30 8L24 14.500V10.200C16 10 12 13 10.500 18C10 11 14 6.500 24 6.200Z" /></svg>
<svg viewBox="0 0 384 512" style="position:absolute;left:2437px;top:275px;width:27px;height:36px;color:#b9d7e5;" fill="currentColor" preserveAspectRatio="xMidYMid meet"><path d="M64 0C28.700 0 0 28.700 0 64V448c0 35.300 28.700 64 64 64H320c35.300 0 64-28.700 64-64V160H256c-17.700 0-32-14.300-32-32V0H64zM256 0V128H384L256 0zM216 408c0 13.300-10.700 24-24 24s-24-10.700-24-24V305.900l-31 31c-9.400 9.400-24.600 9.400-33.900 0s-9.400-24.600 0-33.900l72-72c9.400-9.400 24.600-9.400 33.900 0l72 72c9.400 9.400 9.400 24.600 0 33.900s-24.600 9.400-33.900 0l-31-31V408z" /></svg>
<svg viewBox="0 0 384 512" style="position:absolute;left:2519px;top:275px;width:27px;height:36px;color:#c1ecdd;" fill="currentColor" preserveAspectRatio="xMidYMid meet"><path d="M64 0C28.700 0 0 28.700 0 64V448c0 35.300 28.700 64 64 64H320c35.300 0 64-28.700 64-64V160H256c-17.700 0-32-14.300-32-32V0H64zM256 0V128H384L256 0zM216 232V334.100l31-31c9.400-9.400 24.600-9.400 33.900 0s9.400 24.600 0 33.900l-72 72c-9.400 9.400-24.600 9.400-33.900 0l-72-72c-9.400-9.400-9.400-24.600 0-33.900s24.600-9.400 33.900 0l31 31V232c0-13.300 10.700-24 24-24s24 10.700 24 24z" /></svg>
<svg viewBox="32 96 320 320" style="position:absolute;left:2604px;top:282px;width:22px;height:22px;color:#f8c6d2;" fill="currentColor" preserveAspectRatio="xMidYMid meet"><path d="M342.600 150.600c12.500-12.500 12.500-32.800 0-45.300s-32.800-12.500-45.300 0L192 210.700 86.600 105.400c-12.500-12.500-32.800-12.500-45.300 0s-12.500 32.800 0 45.300L146.700 256 41.400 361.400c-12.500 12.500-12.500 32.800 0 45.300s32.800 12.500 45.300 0L192 301.300 297.400 406.600c12.500 12.500 32.800 12.500 45.300 0s12.500-32.800 0-45.300L237.300 256 342.600 150.600z" /></svg>
<svg viewBox="16 48 416 416" style="position:absolute;left:2714px;top:278px;width:30px;height:30px;color:#073b4c;" fill="currentColor" preserveAspectRatio="xMidYMid meet"><path d="M256 80c0-17.700-14.300-32-32-32s-32 14.300-32 32V224H48c-17.700 0-32 14.300-32 32s14.300 32 32 32H192V432c0 17.700 14.300 32 32 32s32-14.300 32-32V288H400c17.700 0 32-14.300 32-32s-14.300-32-32-32H256V80z" /></svg>
<svg viewBox="0 0 512 512" style="position:absolute;left:2793px;top:275px;width:36px;height:36px;color:#ffd166;" fill="currentColor" preserveAspectRatio="xMidYMid meet"><path d="M410.300 231l11.300-11.300-33.900-33.900-62.100-62.100L291.700 89.800l-11.300 11.300-22.600 22.600L58.600 322.900c-10.400 10.400-18 23.300-22.200 37.400L1 480.700c-2.500 8.400-.2 17.500 6.100 23.700s15.300 8.500 23.700 6.100l120.300-35.400c14.100-4.200 27-11.800 37.400-22.200L387.700 253.700 410.300 231zM160 399.400l-9.100 22.700c-4 3.100-8.500 5.400-13.300 6.900L59.400 452l23-78.100c1.400-4.900 3.800-9.400 6.900-13.300l22.700-9.100v32c0 8.800 7.200 16 16 16h32zM362.700 18.700L348.300 33.200 325.700 55.800 314.300 67.100l33.900 33.900 62.100 62.100 33.900 33.900 11.300-11.300 22.600-22.600 14.500-14.500c25-25 25-65.500 0-90.500L453.300 18.700c-25-25-65.500-25-90.500 0zm-47.400 168l-144 144c-6.200 6.200-16.400 6.200-22.600 0s-6.200-16.400 0-22.600l144-144c6.200-6.200 16.400-6.200 22.600 0s6.200 16.400 0 22.600z" /></svg>
<svg viewBox="0 0 448 512" style="position:absolute;left:2877px;top:275px;width:32px;height:36px;color:#ef476f;" fill="currentColor" preserveAspectRatio="xMidYMid meet"><path d="M135.200 17.700L128 32H32C14.300 32 0 46.300 0 64S14.300 96 32 96H416c17.700 0 32-14.300 32-32s-14.300-32-32-32H320l-7.200-14.300C307.400 6.800 296.300 0 284.200 0H163.800c-12.100 0-23.200 6.800-28.600 17.700zM416 128H32L53.200 467c1.600 25.300 22.600 45 47.900 45H346.900c25.300 0 46.300-19.700 47.900-45L416 128z" /></svg>
<div class="abs" style="left:527px;top:343px;width:2432px;height:1168px;border:2px solid #ddd;background:#fff"></div>
<div class="row h" style="top:345px;height:70px;border-bottom:4px solid #ddd"><div class="c" style="left:0px;width:231px">Mükellef VKN</div><div class="c" style="left:231px;width:679px;letter-spacing:0.32px">Unvan/Ad-Soyad</div><div class="c" style="left:910px;width:323px;letter-spacing:-0.12px">Sözleşme Numarası</div><div class="c" style="left:1233px;width:322px">Müşavir</div><div class="c" style="left:1555px;width:293px">Sözleşme Birimi</div><div class="c" style="left:1848px;width:312px">Sözleşme Türü</div><div class="c" style="left:2160px;width:259px;letter-spacing:-0.2px">Sözleşme Yılı</div><div class="c" style="left:2419px;width:9px"></div></div>
<svg viewBox="0 0 29 29" style="position:absolute;left:1396.5px;top:361px;width:29px;height:29px;color:#c8c8c8;" fill="currentColor" preserveAspectRatio="xMidYMid meet"><path d="M0 0H29V6L19 16.300V28.800H10.200V16.300L0 6Z" /></svg>
<svg viewBox="0 0 29 29" style="position:absolute;left:2041.5px;top:361px;width:29px;height:29px;color:#c8c8c8;" fill="currentColor" preserveAspectRatio="xMidYMid meet"><path d="M0 0H29V6L19 16.300V28.800H10.200V16.300L0 6Z" /></svg>
<svg viewBox="0 0 29 29" style="position:absolute;left:2334.5px;top:361px;width:29px;height:29px;color:#c8c8c8;" fill="currentColor" preserveAspectRatio="xMidYMid meet"><path d="M0 0H29V6L19 16.300V28.800H10.200V16.300L0 6Z" /></svg>
<svg viewBox="0 0 29 29" style="position:absolute;left:2646.5px;top:361px;width:29px;height:29px;color:#c8c8c8;" fill="currentColor" preserveAspectRatio="xMidYMid meet"><path d="M0 0H29V6L19 16.300V28.800H10.200V16.300L0 6Z" /></svg>
<svg viewBox="0 0 29 29" style="position:absolute;left:2905.5px;top:361px;width:29px;height:29px;color:#c8c8c8;" fill="currentColor" preserveAspectRatio="xMidYMid meet"><path d="M0 0H29V6L19 16.300V28.800H10.200V16.300L0 6Z" /></svg>
<div class="row sel" style="top:415px"><div class="c" style="left:0px;width:231px">4564564565</div><div class="c" style="left:231px;width:679px">Akasya Doğa Eğitim Danışmanlık Hizmetleri Ltd. Şti.</div><div class="c" style="left:910px;width:323px;letter-spacing:0.31px">YMM-SOZ/2025/00007</div><div class="c" style="left:1233px;width:322px;letter-spacing:-0.47px">Doğa ÖZDEMİR (Şahıs)</div><div class="c" style="left:1555px;width:293px">Merkez Ofis</div><div class="c" style="left:1848px;width:312px;letter-spacing:-0.25px">Denetim ve Tasdik (TT)</div><div class="c" style="left:2160px;width:259px">2024</div><div class="c" style="left:2419px;width:9px"></div></div>
<div class="row alt" style="top:483px"><div class="c" style="left:0px;width:231px">4564564565</div><div class="c" style="left:231px;width:679px">Akasya Doğa Eğitim Danışmanlık Hizmetleri Ltd. Şti.</div><div class="c" style="left:910px;width:323px;letter-spacing:0.31px">YMM-SOZ/2025/00006</div><div class="c" style="left:1233px;width:322px;letter-spacing:-0.47px">Doğa ÖZDEMİR (Şahıs)</div><div class="c" style="left:1555px;width:293px">Merkez Ofis</div><div class="c" style="left:1848px;width:312px">Tasdik/Hizmet</div><div class="c" style="left:2160px;width:259px">2023</div><div class="c" style="left:2419px;width:9px"></div></div>
<div class="row" style="top:551px"><div class="c" style="left:0px;width:231px">3223421123</div><div class="c" style="left:231px;width:679px;letter-spacing:-0.08px">Vadi Tarım ve Hayvancılık Ltd. Şti.</div><div class="c" style="left:910px;width:323px;letter-spacing:0.31px">YMM-SOZ/2025/00005</div><div class="c" style="left:1233px;width:322px;letter-spacing:-0.47px">Doğa ÖZDEMİR (Şahıs)</div><div class="c" style="left:1555px;width:293px">Merkez Ofis</div><div class="c" style="left:1848px;width:312px">Tasdik/Hizmet</div><div class="c" style="left:2160px;width:259px">2023</div><div class="c" style="left:2419px;width:9px"></div></div>
<div class="row alt" style="top:619px"><div class="c" style="left:0px;width:231px">1111111111</div><div class="c" style="left:231px;width:679px;letter-spacing:0.24px">HGA Tekstil Ltd. Şti.</div><div class="c" style="left:910px;width:323px;letter-spacing:0.31px">YMM-SOZ/2025/00004</div><div class="c" style="left:1233px;width:322px;letter-spacing:-0.47px">Doğa ÖZDEMİR (Şahıs)</div><div class="c" style="left:1555px;width:293px">Adana Ofis</div><div class="c" style="left:1848px;width:312px">Tasdik/Hizmet</div><div class="c" style="left:2160px;width:259px">2024</div><div class="c" style="left:2419px;width:9px"></div></div>
<div class="row" style="top:687px"><div class="c" style="left:0px;width:231px">4564564565</div><div class="c" style="left:231px;width:679px">Akasya Doğa Eğitim Danışmanlık Hizmetleri Ltd. Şti.</div><div class="c" style="left:910px;width:323px;letter-spacing:0.31px">YMM-SOZ/2025/00003</div><div class="c" style="left:1233px;width:322px;letter-spacing:-0.47px">Doğa ÖZDEMİR (Şahıs)</div><div class="c" style="left:1555px;width:293px">Merkez Ofis</div><div class="c" style="left:1848px;width:312px">Tasdik/Hizmet</div><div class="c" style="left:2160px;width:259px">2024</div><div class="c" style="left:2419px;width:9px"></div></div>
<div class="row alt" style="top:755px"><div class="c" style="left:0px;width:231px">3450380139</div><div class="c" style="left:231px;width:679px;letter-spacing:-0.17px">Testing Yazılım ve Donanım A.Ş.</div><div class="c" style="left:910px;width:323px;letter-spacing:0.31px">YMM-SOZ/2025/00002</div><div class="c" style="left:1233px;width:322px;letter-spacing:-0.47px">Eren Test (Şahıs)</div><div class="c" style="left:1555px;width:293px">Merkez Ofis</div><div class="c" style="left:1848px;width:312px">Tasdik/Hizmet</div><div class="c" style="left:2160px;width:259px">2024</div><div class="c" style="left:2419px;width:9px"></div></div>
<div class="row" style="top:823px"><div class="c" style="left:0px;width:231px">3434543534</div><div class="c" style="left:231px;width:679px;letter-spacing:0.2px">Kent Bilişim A.Ş.</div><div class="c" style="left:910px;width:323px;letter-spacing:0.31px">YMM-SOZ/2025/00001</div><div class="c" style="left:1233px;width:322px;letter-spacing:-0.47px">Doğa ÖZDEMİR (Şahıs)</div><div class="c" style="left:1555px;width:293px">İstanbul Ofis</div><div class="c" style="left:1848px;width:312px">Tasdik/Hizmet</div><div class="c" style="left:2160px;width:259px">2024</div><div class="c" style="left:2419px;width:9px"></div></div>
<div class="row alt" style="top:891px"><div class="c" style="left:0px;width:231px">3450380139</div><div class="c" style="left:231px;width:679px;letter-spacing:-0.17px">Testing Yazılım ve Donanım A.Ş.</div><div class="c" style="left:910px;width:323px;letter-spacing:0.31px">YMM-SOZ/2024/00006</div><div class="c" style="left:1233px;width:322px;letter-spacing:-0.47px">Doğa ÖZDEMİR (Şahıs)</div><div class="c" style="left:1555px;width:293px">İzmir Ofis</div><div class="c" style="left:1848px;width:312px">Tasdik/Hizmet</div><div class="c" style="left:2160px;width:259px">2024</div><div class="c" style="left:2419px;width:9px"></div></div>
<div class="row" style="top:959px"><div class="c" style="left:0px;width:231px">1312312312</div><div class="c" style="left:231px;width:679px;letter-spacing:0.11px">Spectrum İnş. Taah. San. Ltd. Şti.</div><div class="c" style="left:910px;width:323px;letter-spacing:0.31px">YMM-SOZ/2024/00005</div><div class="c" style="left:1233px;width:322px;letter-spacing:-0.47px">Doğa ÖZDEMİR (Şahıs)</div><div class="c" style="left:1555px;width:293px">Merkez Ofis</div><div class="c" style="left:1848px;width:312px">Tasdik/Hizmet</div><div class="c" style="left:2160px;width:259px">2024</div><div class="c" style="left:2419px;width:9px"></div></div>
<div class="row alt" style="top:1027px"><div class="c" style="left:0px;width:231px">3434543534</div><div class="c" style="left:231px;width:679px;letter-spacing:0.2px">Kent Bilişim A.Ş.</div><div class="c" style="left:910px;width:323px;letter-spacing:0.31px">YMM-SOZ/2024/00004</div><div class="c" style="left:1233px;width:322px;letter-spacing:-0.47px">Doğa ÖZDEMİR (Şahıs)</div><div class="c" style="left:1555px;width:293px">İstanbul Ofis</div><div class="c" style="left:1848px;width:312px">Tasdik/Hizmet</div><div class="c" style="left:2160px;width:259px">2024</div><div class="c" style="left:2419px;width:9px"></div></div>
<div class="row" style="top:1095px"><div class="c" style="left:0px;width:231px">1312312312</div><div class="c" style="left:231px;width:679px;letter-spacing:0.11px">Spectrum İnş. Taah. San. Ltd. Şti.</div><div class="c" style="left:910px;width:323px;letter-spacing:0.31px">YMM-SOZ/2024/00003</div><div class="c" style="left:1233px;width:322px;letter-spacing:-0.47px">Doğa ÖZDEMİR (Şahıs)</div><div class="c" style="left:1555px;width:293px">Eskişehir Ofis</div><div class="c" style="left:1848px;width:312px">Tasdik/Hizmet</div><div class="c" style="left:2160px;width:259px">2024</div><div class="c" style="left:2419px;width:9px"></div></div>
<div class="row alt" style="top:1163px"><div class="c" style="left:0px;width:231px">1123132132</div><div class="c" style="left:231px;width:679px">Ballıdağ Orman Ürünleri A.Ş.</div><div class="c" style="left:910px;width:323px;letter-spacing:0.31px">YMM-SOZ/2024/00002</div><div class="c" style="left:1233px;width:322px;letter-spacing:-0.47px">Doğa ÖZDEMİR (Şahıs)</div><div class="c" style="left:1555px;width:293px">Eskişehir Ofis</div><div class="c" style="left:1848px;width:312px">Tasdik/Hizmet</div><div class="c" style="left:2160px;width:259px">2023</div><div class="c" style="left:2419px;width:9px"></div></div>
<div class="row" style="top:1231px"><div class="c" style="left:0px;width:231px">1312312312</div><div class="c" style="left:231px;width:679px;letter-spacing:0.11px">Spectrum İnş. Taah. San. Ltd. Şti.</div><div class="c" style="left:910px;width:323px;letter-spacing:0.31px">YMM-SOZ/2024/00001</div><div class="c" style="left:1233px;width:322px;letter-spacing:-0.47px">Doğa ÖZDEMİR (Şahıs)</div><div class="c" style="left:1555px;width:293px">İzmir Ofis</div><div class="c" style="left:1848px;width:312px">Tasdik/Hizmet</div><div class="c" style="left:2160px;width:259px">2023</div><div class="c" style="left:2419px;width:9px"></div></div>
<div class="row alt" style="top:1299px"><div class="c" style="left:0px;width:231px">3434543534</div><div class="c" style="left:231px;width:679px;letter-spacing:0.2px">Kent Bilişim A.Ş.</div><div class="c" style="left:910px;width:323px;letter-spacing:0.31px">YMM-SOZ/2023/00002</div><div class="c" style="left:1233px;width:322px;letter-spacing:-0.47px">Doğa ÖZDEMİR (Şahıs)</div><div class="c" style="left:1555px;width:293px">İstanbul Ofis</div><div class="c" style="left:1848px;width:312px">Tasdik/Hizmet</div><div class="c" style="left:2160px;width:259px">2022</div><div class="c" style="left:2419px;width:9px"></div></div>
<div class="row" style="top:1367px"><div class="c" style="left:0px;width:231px">3450380139</div><div class="c" style="left:231px;width:679px;letter-spacing:-0.17px">Testing Yazılım ve Donanım A.Ş.</div><div class="c" style="left:910px;width:323px;letter-spacing:0.31px">YMM-SOZ/2023/00001</div><div class="c" style="left:1233px;width:322px;letter-spacing:-0.47px">Doğa ÖZDEMİR (Şahıs)</div><div class="c" style="left:1555px;width:293px">Merkez Ofis</div><div class="c" style="left:1848px;width:312px">Tasdik/Hizmet</div><div class="c" style="left:2160px;width:259px">2023</div><div class="c" style="left:2419px;width:9px"></div></div>
<div class="row" style="top:1435px;height:72px;border-bottom:none"><div class="c" style="left:0px;width:231px"></div><div class="c" style="left:231px;width:679px"></div><div class="c" style="left:910px;width:323px;letter-spacing:0.31px"></div><div class="c" style="left:1233px;width:322px;letter-spacing:-0.47px"></div><div class="c" style="left:1555px;width:293px"></div><div class="c" style="left:1848px;width:312px"></div><div class="c" style="left:2160px;width:259px"></div><div class="c" style="left:2419px;width:9px"></div></div>
<div class="abs" style="left:612px;top:1529px;width:73px;height:68px;background:#d4d4d4;border-radius:6px"></div>
<div class="t" style="left:552px;top:1549px;color:#333">10</div>
<div class="t" style="left:634px;top:1549px;color:#333">25</div>
<div class="t" style="left:717px;top:1549px;color:#333">50</div>
<div class="t" style="left:801px;top:1549px;color:#333">100</div>
<div class="t" style="left:2493px;top:1549px;letter-spacing:-0.12px;color:#828282" id="pginfo">Sayfa 1 / 1 (15 veri)</div>
<svg viewBox="0 0 19.500 32" style="position:absolute;left:2777px;top:1547px;width:19.5px;height:32px;color:#c2c2c2;" fill="currentColor" preserveAspectRatio="xMidYMid meet"><path d="M17.800 1.500L3 16L17.800 30.500" stroke="currentColor" stroke-width="4.300" fill="none"/></svg>
<div class="abs" style="left:2831px;top:1529px;width:56px;height:68px;background:#d4d4d4;border-radius:6px"></div>
<div class="t" style="left:2851px;top:1549px;color:#333">1</div>
<svg viewBox="0 0 19.500 32" style="position:absolute;left:2914px;top:1547px;width:19.5px;height:32px;color:#c2c2c2;" fill="currentColor" preserveAspectRatio="xMidYMid meet"><path d="M1.700 1.500L16.500 16L1.700 30.500" stroke="currentColor" stroke-width="4.300" fill="none"/></svg>
<div id="foot" class="abs"></div><div id="footl" class="abs"></div>
<div class="abs" style="left:2993px;top:1622px;width:7px;height:120px;background:#f8f8fa"></div>
<svg viewBox="0 0 448 512" style="position:absolute;left:153.8px;top:1664px;width:21.3px;height:24.2px;color:#0dd6a1;" fill="currentColor" preserveAspectRatio="xMidYMid meet"><path d="M224 256A128 128 0 1 0 224 0a128 128 0 1 0 0 256zm-45.700 48C79.800 304 0 383.800 0 482.300C0 498.700 13.300 512 29.700 512H418.300c16.400 0 29.700-13.300 29.700-29.700C448 383.800 368.200 304 269.700 304H178.300z" /></svg>
<div class="t" style="left:182px;top:1665px;font-size:24px;letter-spacing:-0.4px;color:#fff;-webkit-text-stroke:0" id="un">Eren ÖZDEMİR</div>
<div class="t" style="left:175px;top:1710px;font-size:24px;letter-spacing:0.43px;color:#fff;-webkit-text-stroke:0" id="uo">(Merkez Ofis)</div>
<svg viewBox="0 0 140 82" style="position:absolute;left:506px;top:1640px;width:140px;height:82px;" fill="currentColor" preserveAspectRatio="xMidYMid meet"><g fill="none" stroke-width="4.900" stroke-linecap="butt" stroke-linejoin="round"><path d="M10.800 14.250H32.500A9.470 9.470 0 0 1 32.500 33.200H18.500Q13.250 33.200 13.250 38.500V44.800" stroke="#fff"/><path d="M30.800 33.800L38.200 45.500" stroke="#fff" stroke-width="5.600"/><path d="M52.100 44.800V21.650A7.350 7.350 0 0 1 66.800 21.650V35A7.300 7.300 0 0 0 81.400 35V11.800" stroke="#04a0e8"/><path d="M90 14.250A16.200 14.050 0 0 1 90 42.350M120 14.250A16.200 14.050 0 0 0 120 42.350" stroke="#fff"/></g><rect x="30" y="44.800" width="12" height="4" fill="#212834"/><circle cx="59.500" cy="21.900" r="4.100" fill="#fff" stroke="#212834" stroke-width="1.200"/><circle cx="73.900" cy="34.750" r="4.100" fill="#fff" stroke="#212834" stroke-width="1.200"/><g fill="none" stroke="#04a0e8" stroke-width="2.800" stroke-linecap="round"><path d="M25.600 54.800C24.200 52.600 22 51.800 19.400 51.800C15.600 51.800 13.600 54 13.600 56.300C13.600 59.400 16.500 60.500 19.800 61.300C23.500 62.200 25.900 63.500 25.900 66.300C25.900 69 23.300 70.800 19.700 70.800C16.600 70.800 14.400 69.500 13.100 67.300"/><circle cx="52" cy="61.300" r="9.400"/><path d="M77.500 71.200V52.100H90M77.500 61.500H87"/><path d="M104.500 52.100H119M111.700 52.100V71.200"/></g></svg>
<div class="t" style="left:664px;top:1666px;letter-spacing:0.34px;color:#6c757d" id="copy">Pace Teknoloji 2022 | Tüm hakları saklıdır. ©</div>
<div class="t" style="left:2630px;top:1668px;letter-spacing:0.4px;color:#6c757d" id="date">16 Haziran 2025 Pazartesi</div>
<div class="abs" style="left:2988px;top:112px;width:12px;height:1510px;background:linear-gradient(to right,rgba(0,0,0,0),rgba(0,0,0,0.05) 40%,rgba(0,0,0,0.32))"></div>
</div></body></html>
